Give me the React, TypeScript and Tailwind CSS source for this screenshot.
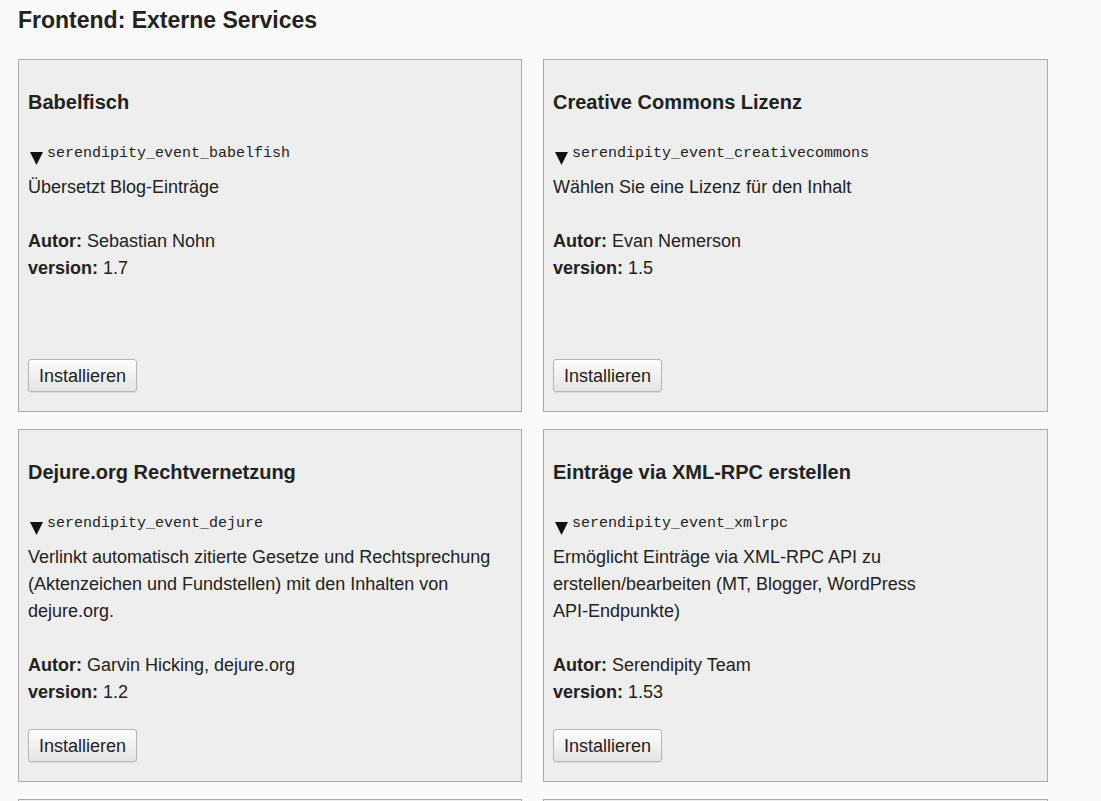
import React from "react";

type Plugin = {
  title: string;
  name: string;
  desc: React.ReactNode;
  author: string;
  version: string;
};

const plugins: Plugin[] = [
  {
    title: "Babelfisch",
    name: "serendipity_event_babelfish",
    desc: "Übersetzt Blog-Einträge",
    author: "Sebastian Nohn",
    version: "1.7",
  },
  {
    title: "Creative Commons Lizenz",
    name: "serendipity_event_creativecommons",
    desc: "Wählen Sie eine Lizenz für den Inhalt",
    author: "Evan Nemerson",
    version: "1.5",
  },
  {
    title: "Dejure.org Rechtvernetzung",
    name: "serendipity_event_dejure",
    desc: "Verlinkt automatisch zitierte Gesetze und Rechtsprechung (Aktenzeichen und Fundstellen) mit den Inhalten von dejure.org.",
    author: "Garvin Hicking, dejure.org",
    version: "1.2",
  },
  {
    title: "Einträge via XML-RPC erstellen",
    name: "serendipity_event_xmlrpc",
    desc: (
      <>
        Ermöglicht Einträge via XML-RPC API zu erstellen/bearbeiten (MT, Blogger, WordPress{" "}
        <span className="whitespace-nowrap">API-Endpunkte)</span>
      </>
    ),
    author: "Serendipity Team",
    version: "1.53",
  },
  {
    title: "Flickr-Bilder",
    name: "serendipity_event_flickr",
    desc: "Bindet Bilder von Flickr in Einträge ein",
    author: "Serendipity Team",
    version: "1.0",
  },
  {
    title: "Google Analytics",
    name: "serendipity_event_google_analytics",
    desc: "Fügt den Google Analytics Code ein",
    author: "Serendipity Team",
    version: "1.3",
  },
];

function Card({ p }: { p: Plugin }) {
  return (
    <div className="flex min-h-[353px] flex-col border border-[#aaa] bg-[#eee] px-[9px] pb-[19px]">
      <h3 className="mt-[30px] text-[20px] font-bold leading-[24px] text-[#222]">{p.title}</h3>
      <div className="mt-[30px] flex h-[20px] items-center">
        <svg width="13" height="13" viewBox="0 0 13 13" className="ml-[2px] mr-[4px] mt-[8px] shrink-0">
          <polygon points="0,0 13,0 6.5,13" fill="#111" />
        </svg>
        <span className="font-['Liberation_Mono',monospace] text-[15px] leading-[20px] text-[#222]">{p.name}</span>
      </div>
      <p className="mt-[10px] pr-[20px] text-[18px] leading-[27px] text-[#222]">{p.desc}</p>
      <div className="mt-[27px] text-[18px] leading-[27px] text-[#222]">
        <div>
          <b>Autor:</b> {p.author}
        </div>
        <div>
          <b>version:</b> {p.version}
        </div>
      </div>
      <div className="mt-auto pt-[23px]">
        <button className="h-[33px] rounded-[3px] border border-[#b5b5b5] bg-gradient-to-b from-[#fdfdfd] to-[#e4e4e4] px-[10px] text-[18px] leading-[20px] text-[#222] shadow-[0_1px_1px_rgba(0,0,0,0.08)]">
          Installieren
        </button>
      </div>
    </div>
  );
}

export default function App() {
  return (
    <div className="min-h-screen bg-[#fafafa] pt-[6px] pl-[18px] font-['Liberation_Sans',Arial,sans-serif] text-[#222]">
      <h2 className="mb-[25px] text-[23px] font-bold leading-[28px]">Frontend: Externe Services</h2>
      <div className="grid grid-cols-[504px_505px] gap-x-[21px] gap-y-[17px] pb-[20px]">
        {plugins.map((p) => (
          <Card key={p.name} p={p} />
        ))}
      </div>
    </div>
  );
}
